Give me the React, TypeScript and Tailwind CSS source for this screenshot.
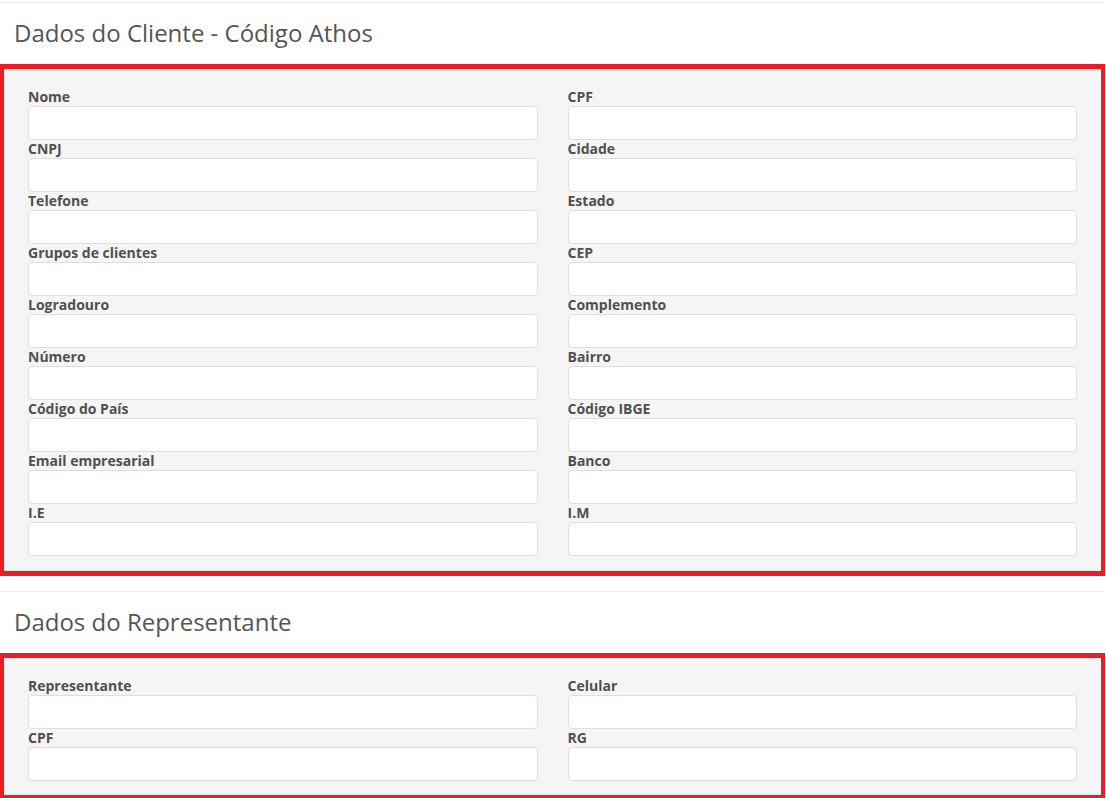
import React from "react";

const clienteFields: [string, string][] = [
  ["Nome", "CPF"],
  ["CNPJ", "Cidade"],
  ["Telefone", "Estado"],
  ["Grupos de clientes", "CEP"],
  ["Logradouro", "Complemento"],
  ["Número", "Bairro"],
  ["Código do País", "Código IBGE"],
  ["Email empresarial", "Banco"],
  ["I.E", "I.M"],
];

const representanteFields: [string, string][] = [
  ["Representante", "Celular"],
  ["CPF", "RG"],
];

function Field({ label }: { label: string }) {
  return (
    <div className="flex flex-col">
      <label className="h-[18px] text-[14px] leading-[18px] font-bold text-[#505050]">
        {label}
      </label>
      <input
        type="text"
        className="h-[34px] w-full rounded-[4px] border border-[#dedede] bg-white px-3 text-[13px] outline-none"
      />
    </div>
  );
}

function Section({
  title,
  rows,
  bottomPad,
}: {
  title: string;
  rows: [string, string][];
  bottomPad: string;
}) {
  return (
    <section className="border-t border-[#eeeeee] pt-[17px]">
      <h3 className="h-[26px] pl-[14px] text-[24px] leading-[26px] font-normal text-[#555555]">
        {title}
      </h3>
      {/* caixa destacada em vermelho */}
      <div className="mt-[18px] border-x-4 border-y-[5px] border-[#ec1c24]">
        <div
          className={`border-b border-[#e3e3e3] bg-[#f5f5f5] pt-[19px] pl-[24px] pr-[24px] ${bottomPad}`}
        >
          <div className="grid grid-cols-2 gap-x-[30px]">
            {rows.map(([left, right]) => (
              <React.Fragment key={left + right}>
                <Field label={left} />
                <Field label={right} />
              </React.Fragment>
            ))}
          </div>
        </div>
      </div>
    </section>
  );
}

export default function App() {
  return (
    <div
      className="min-h-screen bg-white pt-[2px] pr-[1px]"
      style={{ fontFamily: '"Open Sans", "Noto Sans", sans-serif' }}
    >
      <Section
        title="Dados do Cliente - Código Athos"
        rows={clienteFields}
        bottomPad="pb-[14px]"
      />
      <div className="h-[15px]" />
      <Section
        title="Dados do Representante"
        rows={representanteFields}
        bottomPad="pb-[13px]"
      />
    </div>
  );
}
